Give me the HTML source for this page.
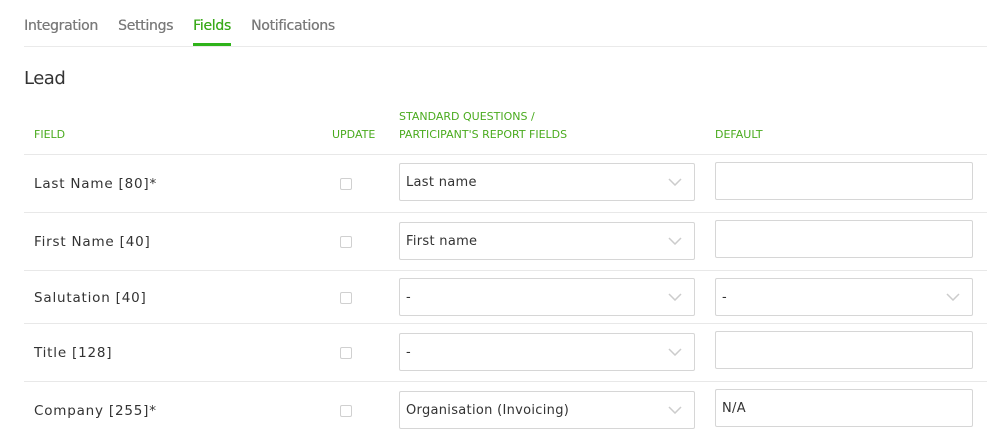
<!DOCTYPE html>
<html><head><style>
*{box-sizing:border-box;margin:0;padding:0}
body{width:987px;height:439px;overflow:hidden;background:#fff;font-family:"DejaVu Sans","Liberation Sans",sans-serif;color:#333;position:relative}
.a{position:absolute}
.tab{position:absolute;top:18px;font-size:14px;color:#7a7a7a;letter-spacing:-0.3px;text-shadow:0.3px 0 0 #7a7a7a}
.hd{position:absolute;font-size:11px;color:#4aab1e;line-height:18px}
.line{position:absolute;left:24px;right:0;height:1px;background:#e8e8e8}
.lbl{position:absolute;left:34px;font-size:13.5px;color:#333;letter-spacing:0.8px}
.cb{position:absolute;left:340px;width:12px;height:12px;border:1px solid #d0d0d0;border-radius:2px;background:#fff}
.sel{position:absolute;height:38px;border:1px solid #d6d6d6;border-radius:2px;font-size:13px;padding-left:6px;line-height:38px;color:#333;letter-spacing:0.3px}
.sel svg{position:absolute;right:12px;top:14px}
</style></head><body>
<div class="tab" style="left:24px">Integration</div>
<div class="tab" style="left:118px">Settings</div>
<div class="tab" style="left:193px;color:#3aaa1a;text-shadow:0.3px 0 0 #3aaa1a">Fields</div>
<div class="tab" style="left:251px">Notifications</div>
<div class="a" style="left:24px;top:46px;right:0;height:1px;background:#eaeaea"></div>
<div class="a" style="left:193px;top:43px;width:38px;height:3px;background:#2fb31a"></div>
<div class="a" style="left:24px;top:68px;font-size:18px;color:#333;letter-spacing:-0.5px">Lead</div>
<div class="hd" style="left:34px;top:126px">FIELD</div>
<div class="hd" style="left:332px;top:126px">UPDATE</div>
<div class="hd" style="left:399px;top:108px">STANDARD QUESTIONS /<br>PARTICIPANT'S REPORT FIELDS</div>
<div class="hd" style="left:715px;top:126px">DEFAULT</div>
<div class="line" style="top:154px"></div>
<div class="line" style="top:212px"></div>
<div class="line" style="top:270px"></div>
<div class="line" style="top:323px"></div>
<div class="line" style="top:381px"></div>

<div class="lbl" style="top:176px">Last Name [80]*</div>
<div class="cb" style="top:178px"></div>
<div class="sel" style="left:399px;top:163px;width:296px">Last name<svg width="14" height="8"><path d="M1 1l6 6 6-6" fill="none" stroke="#ccc" stroke-width="1.5"/></svg></div>
<div class="sel" style="left:715px;top:162px;width:258px"></div>

<div class="lbl" style="top:234px">First Name [40]</div>
<div class="cb" style="top:236px"></div>
<div class="sel" style="left:399px;top:222px;width:296px">First name<svg width="14" height="8"><path d="M1 1l6 6 6-6" fill="none" stroke="#ccc" stroke-width="1.5"/></svg></div>
<div class="sel" style="left:715px;top:220px;width:258px"></div>

<div class="lbl" style="top:290px">Salutation [40]</div>
<div class="cb" style="top:292px"></div>
<div class="sel" style="left:399px;top:278px;width:296px">-<svg width="14" height="8"><path d="M1 1l6 6 6-6" fill="none" stroke="#ccc" stroke-width="1.5"/></svg></div>
<div class="sel" style="left:715px;top:278px;width:258px">-<svg width="14" height="8"><path d="M1 1l6 6 6-6" fill="none" stroke="#ccc" stroke-width="1.5"/></svg></div>

<div class="lbl" style="top:345px">Title [128]</div>
<div class="cb" style="top:347px"></div>
<div class="sel" style="left:399px;top:333px;width:296px">-<svg width="14" height="8"><path d="M1 1l6 6 6-6" fill="none" stroke="#ccc" stroke-width="1.5"/></svg></div>
<div class="sel" style="left:715px;top:331px;width:258px"></div>

<div class="lbl" style="top:403px">Company [255]*</div>
<div class="cb" style="top:405px"></div>
<div class="sel" style="left:399px;top:391px;width:296px">Organisation (Invoicing)<svg width="14" height="8"><path d="M1 1l6 6 6-6" fill="none" stroke="#ccc" stroke-width="1.5"/></svg></div>
<div class="sel" style="left:715px;top:389px;width:258px">N/A</div>
</body></html>
